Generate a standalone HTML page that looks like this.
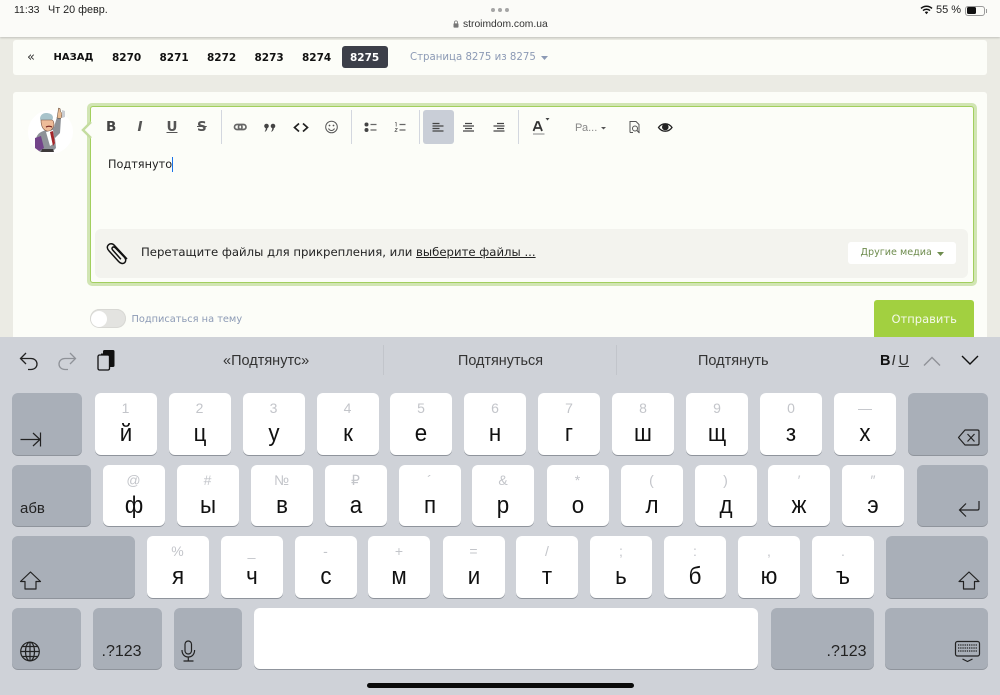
<!DOCTYPE html>
<html lang="ru"><head><meta charset="utf-8"><title>stroimdom</title>
<style>
html,body{margin:0;padding:0}
body{width:1000px;height:694px;position:relative;overflow:hidden;background:#ebebe4;font-family:"Liberation Sans",sans-serif;color:#111}
div,span,svg{position:absolute;box-sizing:border-box}
.t{white-space:nowrap;line-height:1}
.v{font-family:"DejaVu Sans",sans-serif}
.pg{font:bold 10.5px/1 "DejaVu Sans",sans-serif;top:52.500px;white-space:nowrap;color:#111}
.sep{width:1px;top:110px;height:34px;background:#d3d7df}
.k{width:62px;height:61.500px;background:#fff;border-radius:6px;box-shadow:0 1px 0 #8f949c}
.k i{position:absolute;left:0;right:0;top:7px;text-align:center;font:14px/16px "Liberation Sans",sans-serif;color:#c3c5ca}
.k b{position:absolute;left:0;right:0;top:27px;text-align:center;font:normal 24px/28px "Liberation Sans",sans-serif;color:#111;transform:scaleX(.93)}
.r1{top:393px}.r2{top:464.500px}.r3{top:536px}
.s{background:#a9afb8;border-radius:6px;box-shadow:0 1px 0 #8f949c}
</style></head><body>

<!-- top bar -->
<div style="left:0;top:0;width:1000px;height:36.500px;background:#fbfbf8;box-shadow:0 1px 2px rgba(0,0,0,.18);z-index:2"></div>
<div style="left:0;top:0;width:1000px;height:37px;z-index:3">
  <span class="t" style="left:14px;top:5px;font-size:10.500px;color:#222">11:33</span>
  <span class="t" style="left:48px;top:5px;font-size:10.800px;color:#222">Чт 20 февр.</span>
  <span style="left:491px;top:8px;width:4px;height:4px;border-radius:50%;background:#a5a5a5"></span>
  <span style="left:498px;top:8px;width:4px;height:4px;border-radius:50%;background:#a5a5a5"></span>
  <span style="left:505px;top:8px;width:4px;height:4px;border-radius:50%;background:#a5a5a5"></span>
  <svg style="left:453px;top:20px" width="6" height="8" viewBox="0 0 6 8"><path d="M1.500 3.500V2.400a1.500 1.500 0 0 1 3 0v1.100" fill="none" stroke="#777" stroke-width=".8"/><rect x=".5" y="3.400" width="5" height="4.200" rx=".7" fill="#777"/></svg>
  <span class="t" style="left:463px;top:19.500px;font-size:10.300px;color:#333">stroimdom.com.ua</span>
  <svg style="left:920px;top:4.500px" width="13" height="10" viewBox="0 0 13 10"><path d="M1 3.400a8 8 0 0 1 11 0M3 5.600a5.200 5.200 0 0 1 7 0" fill="none" stroke="#111" stroke-width="1.500"/><path d="M4.800 7.200a2.600 2.600 0 0 1 3.400 0L6.500 9.200z" fill="#111"/></svg>
  <span class="t" style="left:936px;top:5px;font-size:11px;color:#222">55 %</span>
  <div style="left:965px;top:5.500px;width:20px;height:10px;border:1px solid #9a9a9a;border-radius:3px"></div>
  <div style="left:966.500px;top:7px;width:9.500px;height:7px;background:#111;border-radius:1.500px"></div>
  <div style="left:986px;top:8.500px;width:1px;height:4px;background:#999"></div>
</div>

<!-- pagination -->
<div style="left:13px;top:40px;width:974px;height:35px;background:#fcfdf8;border-radius:3px"></div>
<span class="t" style="left:27px;top:51px;font:13px/1 'DejaVu Sans',sans-serif;color:#333">«</span>
<span class="pg" style="left:53.500px;font-size:10px;top:53px">НАЗАД</span>
<span class="pg" style="left:112px">8270</span>
<span class="pg" style="left:159.500px">8271</span>
<span class="pg" style="left:207px">8272</span>
<span class="pg" style="left:254.500px">8273</span>
<span class="pg" style="left:302px">8274</span>
<div style="left:341.500px;top:46px;width:46px;height:22px;background:#3c3f49;border-radius:3px"></div>
<span class="pg" style="left:350px;color:#fff">8275</span>
<span class="t v" style="left:410px;top:53px;font-size:10.200px;color:#8c9ab5">Страница 8275 из 8275</span>
<svg style="left:541px;top:56px" width="7" height="4" viewBox="0 0 7 4"><path d="M0 0h7L3.500 4z" fill="#8c9ab5"/></svg>

<!-- main panel -->
<div style="left:13px;top:92px;width:974px;height:260px;background:#fcfdf8;border-radius:3px"></div>

<!-- avatar -->
<div style="left:28px;top:110px;width:45px;height:44px;border-radius:50%;background:#fff"></div>
<svg style="left:28px;top:106px" width="46" height="50" viewBox="0 0 46 50">
  <path d="M8 33c1-6 6-8 11-9l7-3 3-10 4 1-1 15-5 5 1 10-4 4H12l-3-4z" fill="#8e9298"/>
  <path d="M29 12l1-6 .5-4 1.500.5.500 3 1.500 2-.5 4-1 1z" fill="#e9bd95" stroke="#5b4436" stroke-width=".5"/>
  <path d="M34 4l3 1v6l-3 1z" fill="#c9cdd2"/>
  <path d="M12 13c0-4 3-6 6-6 3 0 7 1 7 5l-1 3H13z" fill="#a8c3cb"/>
  <path d="M13 14c0 6 2 10 6 11 3 1 6-2 7-6 0-3-1-5-2-5H15z" fill="#eebc99" stroke="#7a5544" stroke-width=".6"/>
  <path d="M18 21c2-1 4-1 6 0" stroke="#7a2a25" stroke-width="1.300" fill="none"/>
  <path d="M18 26l7-2 2 13-5 3z" fill="#fff"/>
  <path d="M22 26l3-1 2 12-2 3z" fill="#a3262a"/>
  <path d="M7 32l6-2 3 12-5 3-4-3z" fill="#73448a"/>
  <path d="M14 43h11l1 3H13z" fill="#3d3a3a"/>
</svg>

<!-- editor -->
<div style="left:87px;top:102.500px;width:890px;height:183.500px;background:#d1e5b3;border-radius:5px"></div>
<div style="left:90px;top:105.500px;width:883.500px;height:177.500px;background:#fcfdf8;border:1.500px solid #a2cf5e;border-radius:3px"></div>
<svg style="left:81px;top:121px" width="12" height="18" viewBox="0 0 12 18"><path d="M10 1L2 9l8 8" fill="#fcfdf8" stroke="#c4dc9f" stroke-width="2.500"/><path d="M10.500 2.500v13L4 9z" fill="#fcfdf8"/></svg>

<!-- toolbar -->
<div class="sep" style="left:221px"></div>
<div class="sep" style="left:350.500px"></div>
<div class="sep" style="left:418.500px"></div>
<div class="sep" style="left:518px"></div>
<div style="left:423px;top:110px;width:30.500px;height:34px;background:#c9ced7;border-radius:3px"></div>
<span class="t v" style="left:106px;top:121px;font-size:13.500px;font-weight:bold;color:#444">B</span>
<span class="t v" style="left:137.500px;top:121px;font-size:13.500px;font-style:italic;font-weight:bold;color:#555">I</span>
<span class="t v" style="left:166.500px;top:121px;font-size:13.500px;font-weight:bold;color:#555;text-decoration:underline">U</span>
<span class="t v" style="left:197px;top:121px;font-size:13.500px;font-weight:bold;color:#555;text-decoration:line-through">S</span>
<svg style="left:0;top:0;z-index:1" width="1000" height="336" viewBox="0 0 1000 336">
  <g fill="none" stroke="#666" stroke-width="1.700"><rect x="234.500" y="124.500" width="7.500" height="5" rx="2.500"/><rect x="238.500" y="124.500" width="7.500" height="5" rx="2.500"/></g>
  <g fill="#444"><circle cx="266.500" cy="126" r="2.300"/><circle cx="273" cy="126" r="2.300"/><path d="M267 127c.8 1.800 0 3.500-1.800 4.800l-.5-.5c1-1 1.200-2.200 1-3.800zM273.500 127c.8 1.800 0 3.500-1.800 4.800l-.5-.5c1-1 1.200-2.200 1-3.800z"/></g>
  <path d="M299 123.500l-4.500 4 4.500 4M303 123.500l4.500 4-4.500 4" fill="none" stroke="#222" stroke-width="1.700"/>
  <g fill="none" stroke="#555" stroke-width="1"><circle cx="331.500" cy="127" r="5.800"/><path d="M328.500 128.500c1.300 2.600 4.700 2.600 6 0"/></g>
  <circle cx="329.500" cy="125.500" r=".9" fill="#555"/><circle cx="333.500" cy="125.500" r=".9" fill="#555"/>
  <g fill="#444"><circle cx="366.500" cy="124.500" r="2"/><circle cx="366.500" cy="130" r="2"/></g>
  <path d="M370.500 124.500h6M370.500 130h6" stroke="#666" stroke-width="1.200"/>
  <path d="M395 122.500h1.200v4M395 128.500h2.200l-2.200 3h2.400" fill="none" stroke="#666" stroke-width=".8"/>
  <path d="M399.500 124.500h6M399.500 130h6" stroke="#666" stroke-width="1.200"/>
  <path d="M432.500 123.500h7M432.500 126h11M432.500 128.500h7M432.500 131h11" stroke="#444" stroke-width="1.300"/>
  <path d="M465 123.500h7M463 126h11M465 128.500h7M463 131h11" stroke="#444" stroke-width="1.300"/>
  <path d="M497 123.500h7M493.500 126h11M497 128.500h7M493.500 131h11" stroke="#444" stroke-width="1.300"/>
  <path d="M533.500 131l3.500-9h1.500l3.500 9M535 128h6" fill="none" stroke="#333" stroke-width="1.800"/>
  <path d="M533 134h11.500" stroke="#999" stroke-width="1.200"/>
  <path d="M545.500 118h4l-2 2.500z" fill="#444"/>
  <path d="M601 127h5l-2.500 2.500z" fill="#555"/>
  <path d="M630 132.500v-11h6l3 3v8" fill="none" stroke="#555" stroke-width="1"/><path d="M630 132.500h3" stroke="#555"/>
  <circle cx="635" cy="128.500" r="2.500" fill="none" stroke="#555" stroke-width="1"/><path d="M637 130.500l2.500 2.500" stroke="#555" stroke-width="1.200"/>
  <path d="M658.500 127.500c3.500-5 10-5 13.500 0-3.500 5-10 5-13.500 0z" fill="#fcfdf8" stroke="#222" stroke-width="1.300"/>
  <circle cx="665.300" cy="127" r="3.300" fill="#222"/>
</svg>
<span class="t" style="left:575px;top:123px;font-size:11px;color:#888;z-index:1">Ра...</span>

<!-- content -->
<span class="t v" style="left:108px;top:158.500px;font-size:11.300px;color:#222">Подтянуто</span>
<div style="left:171.500px;top:157px;width:1.500px;height:15px;background:#1a73e8"></div>

<!-- attach -->
<div style="left:94.500px;top:229px;width:873.500px;height:49px;background:#f3f3ee;border-radius:6px"></div>
<svg style="left:105px;top:240px" width="26" height="26" viewBox="0 0 26 26"><path d="M22 19L9.500 5.500C7.500 3.300 4.800 3.300 3.300 5c-1.500 1.600-1.200 3.900.7 5.900l9.600 10.600c1.800 2 4.300 2.700 6 1.200 1.700-1.600 1.200-3.900-.4-5.700L10.500 8c-1-1.100-2.200-1.300-3-.6-.8.700-.6 1.800.4 2.900l8 8.900" fill="none" stroke="#111" stroke-width="1.500"/></svg>
<span class="t v" style="left:141px;top:247px;font-size:11.700px;color:#222">Перетащите файлы для прикрепления, или <span style="position:static;text-decoration:underline">выберите файлы ...</span></span>
<div style="left:848px;top:242px;width:108px;height:22px;background:#fff;border-radius:3px"></div>
<span class="t v" style="left:860.500px;top:248px;font-size:9.600px;color:#6e8c4e">Другие медиа</span>
<svg style="left:937px;top:252px" width="7" height="4" viewBox="0 0 7 4"><path d="M0 0h7L3.500 4z" fill="#6e8c4e"/></svg>

<!-- subscribe -->
<div style="left:89.500px;top:309px;width:36px;height:19px;background:#e3e3e0;border-radius:10px;box-shadow:inset 0 0 0 1px #d8d8d4"></div>
<div style="left:91px;top:310.500px;width:16px;height:16px;background:#fff;border-radius:50%"></div>
<span class="t v" style="left:131.500px;top:314.500px;font-size:9.800px;color:#8c9ab5">Подписаться на тему</span>
<div style="left:874px;top:300px;width:100px;height:40px;background:#a2d040;border-radius:3px"></div>
<span class="t v" style="left:891.500px;top:313.500px;font-size:11.500px;color:#f4f9e8">Отправить</span>

<!-- keyboard -->
<div style="left:0;top:336.700px;width:1000px;height:358px;background:#cfd2d8"></div>
<div style="left:383px;top:345px;width:1px;height:30px;background:#c2c5cb"></div>
<div style="left:616px;top:345px;width:1px;height:30px;background:#c2c5cb"></div>
<span class="t" style="left:223px;top:353.500px;font-size:14.500px;color:#333">«Подтянутс»</span>
<span class="t" style="left:458px;top:353.500px;font-size:14.400px;color:#333">Подтянуться</span>
<span class="t" style="left:698px;top:353.500px;font-size:14.500px;color:#333">Подтянуть</span>
<span class="t" style="left:880px;top:353.500px;font-size:14.500px;font-weight:bold;color:#111">B</span>
<span class="t" style="left:891.500px;top:353.500px;font-size:14.500px;font-style:italic;color:#333">I</span>
<span class="t" style="left:898.500px;top:353.500px;font-size:14.500px;color:#333;text-decoration:underline">U</span>

<svg style="left:0;top:337px" width="1000" height="50" viewBox="0 337 1000 50">
  <path d="M26 353l-5.500 5.500 5.500 5.500M21 358.500h10c3.500 0 6 2.300 6 5.500s-2.500 5.500-6 5.500h-3" fill="none" stroke="#222" stroke-width="1.300"/>
  <path d="M70 353l5.500 5.500-5.500 5.500M75 358.500H65c-3.500 0-6 2.300-6 5.500s2.500 5.500 6 5.500h3" fill="none" stroke="#8f9298" stroke-width="1.300"/>
  <rect x="103" y="350" width="11.500" height="17" rx="1.500" fill="#111"/>
  <rect x="98" y="355" width="11.500" height="15" rx="1.500" fill="#cfd2d8" stroke="#111" stroke-width="1.300"/>
  <path d="M101 355v-1.500h5.500V355" fill="#111"/>
  <path d="M924 365.500l8-8 8 8" fill="none" stroke="#8f9298" stroke-width="1.400"/>
  <path d="M962 356l8 8 8-8" fill="none" stroke="#111" stroke-width="1.400"/>
</svg>

<!-- row 1 -->
<div class="s r1" style="left:12px;width:70px;height:61.500px"></div>
<div class="k r1" style="left:94.500px"><i>1</i><b>й</b></div>
<div class="k r1" style="left:168.500px"><i>2</i><b>ц</b></div>
<div class="k r1" style="left:242.500px"><i>3</i><b>у</b></div>
<div class="k r1" style="left:316.500px"><i>4</i><b>к</b></div>
<div class="k r1" style="left:390px"><i>5</i><b>е</b></div>
<div class="k r1" style="left:464px"><i>6</i><b>н</b></div>
<div class="k r1" style="left:538px"><i>7</i><b>г</b></div>
<div class="k r1" style="left:612px"><i>8</i><b>ш</b></div>
<div class="k r1" style="left:686px"><i>9</i><b>щ</b></div>
<div class="k r1" style="left:760px"><i>0</i><b>з</b></div>
<div class="k r1" style="left:834px"><i>—</i><b>х</b></div>
<div class="s r1" style="left:908px;width:80px;height:61.500px"></div>

<!-- row 2 -->
<div class="s r2" style="left:12px;width:78.500px;height:61.500px"></div>
<span class="t" style="left:20px;top:501px;font-size:15px;color:#222">абв</span>
<div class="k r2" style="left:102.500px"><i>@</i><b>ф</b></div>
<div class="k r2" style="left:176.500px"><i>#</i><b>ы</b></div>
<div class="k r2" style="left:250.500px"><i>№</i><b>в</b></div>
<div class="k r2" style="left:324.500px"><i>₽</i><b>а</b></div>
<div class="k r2" style="left:398.500px"><i>´</i><b>п</b></div>
<div class="k r2" style="left:472px"><i>&amp;</i><b>р</b></div>
<div class="k r2" style="left:546.500px"><i>*</i><b>о</b></div>
<div class="k r2" style="left:620.500px"><i>(</i><b>л</b></div>
<div class="k r2" style="left:694.500px"><i>)</i><b>д</b></div>
<div class="k r2" style="left:768px"><i>′</i><b>ж</b></div>
<div class="k r2" style="left:842px"><i>″</i><b>э</b></div>
<div class="s r2" style="left:916.500px;width:71.500px;height:61.500px"></div>

<!-- row 3 -->
<div class="s r3" style="left:12px;width:122.500px;height:61.500px"></div>
<div class="k r3" style="left:146.500px"><i>%</i><b>я</b></div>
<div class="k r3" style="left:220.500px"><i>_</i><b>ч</b></div>
<div class="k r3" style="left:294.500px"><i>-</i><b>с</b></div>
<div class="k r3" style="left:368px"><i>+</i><b>м</b></div>
<div class="k r3" style="left:442.500px"><i>=</i><b>и</b></div>
<div class="k r3" style="left:516px"><i>/</i><b>т</b></div>
<div class="k r3" style="left:590px"><i>;</i><b>ь</b></div>
<div class="k r3" style="left:664px"><i>:</i><b>б</b></div>
<div class="k r3" style="left:738px"><i>,</i><b>ю</b></div>
<div class="k r3" style="left:812px"><i>.</i><b>ъ</b></div>
<div class="s r3" style="left:886px;width:102px;height:61.500px"></div>

<!-- row 4 -->
<div class="s" style="left:12px;top:607.500px;width:68.500px;height:61.500px"></div>
<div class="s" style="left:93px;top:607.500px;width:68.500px;height:61.500px"></div>
<div class="s" style="left:173.500px;top:607.500px;width:68.500px;height:61.500px"></div>
<div style="left:254px;top:607.500px;width:504px;height:61.500px;background:#fff;border-radius:6px;box-shadow:0 1px 0 #8f949c"></div>
<div class="s" style="left:770.500px;top:607.500px;width:103px;height:61.500px"></div>
<div class="s" style="left:885px;top:607.500px;width:103px;height:61.500px"></div>
<span class="t" style="left:101.500px;top:644px;font-size:16px;color:#222">.?123</span>
<span class="t" style="left:826.500px;top:644px;font-size:16px;color:#222">.?123</span>

<!-- keyboard icons -->
<svg style="left:0;top:385px" width="1000" height="309" viewBox="0 385 1000 309">
  <g fill="none" stroke="#222" stroke-width="1.200">
    <path d="M20.500 439.500h19M33 433l7 6.500-7 6.500M40.500 432.500v14"/>
    <path d="M30.500 572l-10 9.500H25v7.500h11v-7.500h4.500z" stroke-linejoin="round"/>
    <path d="M969 572l-10 9.500h4.500v7.500h11v-7.500h4.500z" stroke-linejoin="round"/>
    <circle cx="30" cy="651.500" r="9.300"/>
    <ellipse cx="30" cy="651.500" rx="4.500" ry="9.300"/>
    <path d="M30 642.200v18.600M20.700 651.500h18.600M22 646.500h16M22 656.500h16"/>
    <rect x="185" y="641" width="6.500" height="13" rx="3.250"/>
    <path d="M182 650c0 4.500 2.800 7 6.300 7s6.300-2.500 6.300-7M188.300 657v3.500M183.500 661h10"/>
    <path d="M958.500 437.500l6.500-7.500h12.500c1 0 1.500.5 1.500 1.500v12c0 1-.5 1.500-1.500 1.500H965z" stroke-linejoin="round"/>
    <path d="M967.500 434l7 7.500M974.500 434l-7 7.500"/>
    <path d="M979 501v7.500c0 1-.5 1.500-1.500 1.500h-18M966 503.500l-6.500 6.500 6.500 6.500"/>
    <rect x="955.500" y="641.500" width="24" height="14.500" rx="2"/>
    <path d="M958 645h19M958 648h19M958 651h19" stroke-dasharray="1.300 .9"/>
    <path d="M962.500 659l5 2.500 5-2.500"/>
  </g>
</svg>

<!-- home bar -->
<div style="left:366.500px;top:683px;width:267px;height:5px;background:#0a0a0a;border-radius:3px"></div>
</body></html>
